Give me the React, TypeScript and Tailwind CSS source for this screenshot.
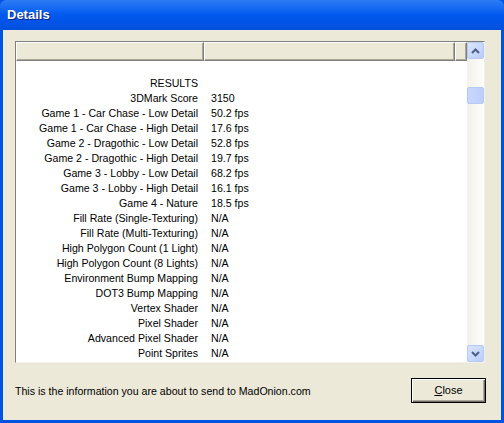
const rows: [string, string][] = [
  ["", ""],
  ["RESULTS", ""],
  ["3DMark Score", "3150"],
  ["Game 1 - Car Chase - Low Detail", "50.2 fps"],
  ["Game 1 - Car Chase - High Detail", "17.6 fps"],
  ["Game 2 - Dragothic - Low Detail", "52.8 fps"],
  ["Game 2 - Dragothic - High Detail", "19.7 fps"],
  ["Game 3 - Lobby - Low Detail", "68.2 fps"],
  ["Game 3 - Lobby - High Detail", "16.1 fps"],
  ["Game 4 - Nature", "18.5 fps"],
  ["Fill Rate (Single-Texturing)", "N/A"],
  ["Fill Rate (Multi-Texturing)", "N/A"],
  ["High Polygon Count (1 Light)", "N/A"],
  ["High Polygon Count (8 Lights)", "N/A"],
  ["Environment Bump Mapping", "N/A"],
  ["DOT3 Bump Mapping", "N/A"],
  ["Vertex Shader", "N/A"],
  ["Pixel Shader", "N/A"],
  ["Advanced Pixel Shader", "N/A"],
  ["Point Sprites", "N/A"],
];

function ScrollButton({ up }: { up?: boolean }) {
  return (
    <div className="h-[17px] w-[17px] rounded-[2px] border border-[#b6c9f4] bg-gradient-to-br from-[#dbe6fe] to-[#b8cdfb] flex items-center justify-center">
      <svg width="9" height="6" viewBox="0 0 9 6">
        <path
          d={up ? "M1 5 L4.5 1.5 L8 5" : "M1 1 L4.5 4.5 L8 1"}
          fill="none"
          stroke="#4d6185"
          strokeWidth="2"
        />
      </svg>
    </div>
  );
}

export default function App() {
  return (
    <div
      className="w-[504px] h-[423px] flex flex-col bg-[#0053e1] overflow-hidden"
      style={{ fontFamily: '"Liberation Sans", Arial, sans-serif' }}
    >
      <div className="h-[30px] shrink-0 flex items-center pl-[7px] bg-gradient-to-b from-[#2b7cf5] via-[#0058ee] to-[#0050dc] rounded-t-[6px]">
        <span className="text-white font-bold text-[13px] [text-shadow:1px_1px_0_#0a1f7a]">
          Details
        </span>
      </div>
      <div className="flex-1 mx-[3px] mb-[3px] bg-[#ece9d8] flex flex-col pl-[12px] pr-[16px] pt-[11px]">
        <div className="h-[322px] border border-[#7f7f7f] border-r-[#f0f0f0] border-b-[#f0f0f0] bg-white flex text-[10.6px] text-black">
          <div className="flex-1 flex flex-col">
            <div className="h-[19px] flex shrink-0 bg-[#ece9d8]">
              <div className="w-[188px] border-t border-l border-white border-r border-r-[#7f7f7f] border-b border-b-[#7f7f7f] shadow-[inset_-1px_-1px_0_#aca899]" />
              <div className="w-[251px] border-t border-l border-white border-r border-r-[#7f7f7f] border-b border-b-[#7f7f7f] shadow-[inset_-1px_-1px_0_#aca899]" />
              <div className="flex-1 border-t border-l border-white border-r border-r-[#7f7f7f] border-b border-b-[#7f7f7f] shadow-[inset_-1px_-1px_0_#aca899]" />
            </div>
            <div className="flex flex-col">
              {rows.map(([label, value], i) => (
                <div key={i} className="h-[15px] flex items-center leading-none">
                  <div className="w-[182px] text-right">{label}</div>
                  <div className="pl-[13px]">{value}</div>
                </div>
              ))}
            </div>
          </div>
          <div className="w-[17px] shrink-0 bg-gradient-to-r from-[#f3f1ec] to-[#fdfdfa] flex flex-col justify-between">
            <div className="flex flex-col">
              <ScrollButton up />
              <div className="h-[28px]" />
              <div className="h-[17px] w-[17px] rounded-[2px] border border-[#b6c9f4] bg-gradient-to-r from-[#c9d8fc] to-[#bccefa]" />
            </div>
            <ScrollButton />
          </div>
        </div>
        <div className="flex items-center justify-between mt-[15px]">
          <span className="text-[10.6px] text-black pt-[3px]">
            This is the information you are about to send to MadOnion.com
          </span>
          <button className="w-[75px] h-[25px] border border-black bg-[#ece9d8] shadow-[inset_1px_1px_0_#ffffff,inset_-1px_-1px_0_#716f64,inset_-2px_-2px_0_#aca899] text-[11px] text-black -mr-[1px]">
            <span className="underline">C</span>lose
          </button>
        </div>
      </div>
    </div>
  );
}
